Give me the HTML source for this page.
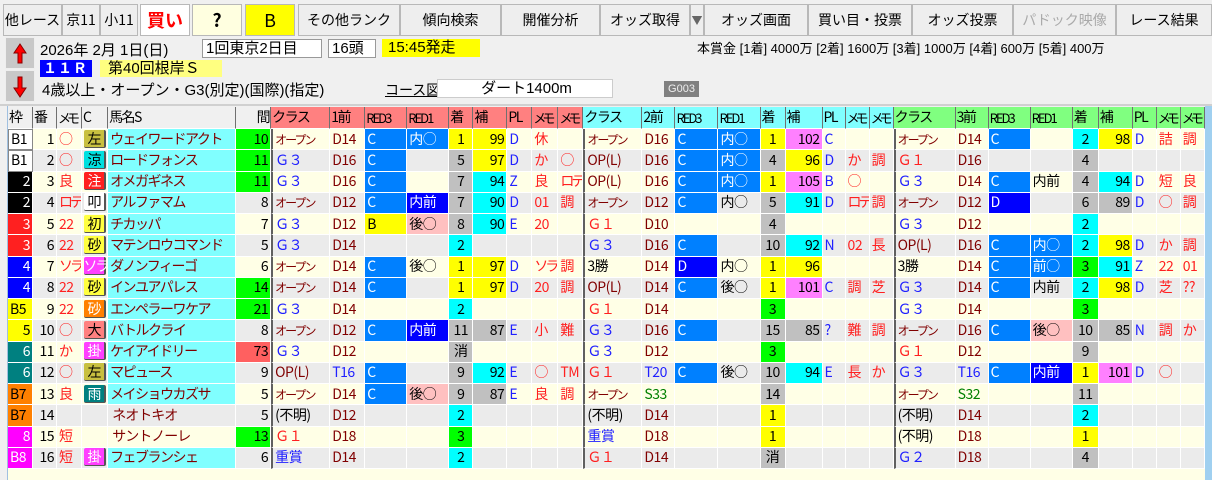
<!DOCTYPE html>
<html><head><meta charset="utf-8">
<style>
*{box-sizing:border-box;margin:0;padding:0}
body{width:1212px;height:480px;overflow:hidden;background:#f0f0f0;font-family:"Liberation Sans","Noto Sans CJK JP",sans-serif;position:relative;font-size:15px;color:#000}
.b{position:absolute;top:4px;height:32px;border:1px solid #b8b8b8;background:#eeeeee;text-align:center;line-height:30px;font-size:14px;white-space:nowrap;overflow:hidden;font-family:"Noto Sans CJK JP",sans-serif}
.a{position:absolute;font-size:15px;white-space:nowrap}
.box{position:absolute;background:#fff;border:1px solid #999;font-size:15px;line-height:17px;padding-left:3px}
table{position:absolute;left:8px;top:107px;border-collapse:separate;border-spacing:0;table-layout:fixed;width:1197px;background:#ffffe6;font-family:"Noto Sans CJK JP",sans-serif}
td{height:21.25px;border-right:1px solid #fff;border-bottom:1px solid #fff;font-size:14px;line-height:19px;padding:0 2px;white-space:nowrap;overflow:hidden;letter-spacing:-0.5px}
tr.h td{height:22px;background:#f0f0f0;border-right:1px solid #707070;border-bottom:1px solid #fff;font-size:14px;letter-spacing:-1.5px;padding:0 1px}
tr.h td.s{background:#ff8080}tr.h td.c{background:#80ffff}tr.h td.l{background:#80ff80}
tr.h td.n{font-size:13px;letter-spacing:-2px}
tr.h td.mm{font-size:13px;letter-spacing:-4px}
tr.e td{background:#ebebeb}
tr td.nm{background:#80ffff;color:#800000;letter-spacing:-1.5px}
tr td.ne{color:#800000;letter-spacing:-1px}
.r{text-align:right}.cc{text-align:center}
.sep{border-left:2px solid #606060}
.y{background:#ffff00 !important}.cy{background:#00ffff !important}.gr{background:#c0c0c0 !important}.g{background:#00ff00 !important}.m{background:#ff80ff !important}
.bl{background:#0080ff !important;color:#fff}.db{background:#0000ff !important;color:#fff}.pk{background:#ffc0c0 !important}
.rd{color:#ff2020}.dr{color:#800000}.bu{color:#2020ff}.gn{color:#008000}
.t{letter-spacing:-3px !important}
.op{color:#800000;font-size:12px !important;letter-spacing:-2px !important}
.w{background:#fff !important;border:1px solid #888 !important}
.k{background:#000 !important;color:#fff}.r3{background:#ff2020 !important;color:#fff}.f4{background:#0000ff !important;color:#fff}.f5{background:#ffff00 !important}.f6{background:#008080 !important;color:#fff}.f7{background:#ff8000 !important}.f8{background:#ff00ff !important;color:#fff}
.ic{padding:0 !important;text-align:center;letter-spacing:-2px}
.ic span{display:inline-block;width:22px;height:18px;line-height:18px;border-radius:2px;border-right:2px solid #555;border-bottom:1px solid #555}
</style></head><body>
<div class="b" style="left:3px;width:59px">他レース</div>
<div class="b" style="left:62px;width:38px">京11</div>
<div class="b" style="left:100px;width:38px">小11</div>
<div class="b" style="left:140px;width:50px;background:#fff;color:#ff0000;font-weight:bold;font-size:18px">買い</div>
<div class="b" style="left:192px;width:50px;background:#ffffe0;font-weight:bold;font-size:18px">?</div>
<div class="b" style="left:245px;width:50px;background:#ffff00;font-size:18px">B</div>
<div class="b" style="left:298px;width:102px">その他ランク</div>
<div class="b" style="left:400px;width:101px">傾向検索</div>
<div class="b" style="left:501px;width:99px">開催分析</div>
<div class="b" style="left:600px;width:90px">オッズ取得</div>
<div class="b" style="left:690px;width:14px;color:#666;font-size:11px">▼</div>
<div class="b" style="left:704px;width:104px">オッズ画面</div>
<div class="b" style="left:808px;width:104px">買い目・投票</div>
<div class="b" style="left:912px;width:101px">オッズ投票</div>
<div class="b" style="left:1013px;width:103px;color:#aaa">パドック映像</div>
<div class="b" style="left:1116px;width:96px">レース結果</div>

<div style="position:absolute;left:5px;top:37px;width:30px;height:32px;background:#c8c8c8;border:1px solid #eee"><svg width="28" height="30"><path d="M14 6 L8 15 H12 V25 H16 V15 H20 Z" fill="#f00" stroke="#800" stroke-width="1"/></svg></div>
<div style="position:absolute;left:5px;top:70px;width:30px;height:32px;background:#c8c8c8;border:1px solid #eee"><svg width="28" height="30"><path d="M14 26 L8 17 H12 V6 H16 V17 H20 Z" fill="#f00" stroke="#800" stroke-width="1"/></svg></div>
<div class="a" style="left:40px;top:39px">2026年 2月 1日(日)</div>
<div class="box" style="left:202px;top:39px;width:120px">1回東京2日目</div>
<div class="box" style="left:328px;top:39px;width:48px">16頭</div>
<div class="a" style="left:382px;top:39px;width:98px;height:18px;background:#ffff00;line-height:18px;padding-left:6px">15:45発走</div>
<div class="a" style="left:697px;top:38px;font-size:13px">本賞金 [1着] 4000万 [2着] 1600万 [3着] 1000万 [4着] 600万 [5着] 400万</div>
<div class="a" style="left:40px;top:60px;width:52px;height:17px;background:#0000ff;color:#fff;line-height:17px;font-weight:bold;font-size:14px;letter-spacing:1px;padding-left:3px">１１Ｒ</div>
<div class="a" style="left:100px;top:60px;width:122px;height:17px;background:#ffff80;line-height:17px;padding-left:8px">第40回根岸Ｓ</div>
<div class="a" style="left:42px;top:79px">4歳以上・オープン・G3(別定)(国際)(指定)</div>
<div class="a" style="left:385px;top:80px;text-decoration:underline;font-size:14px">コース図</div>
<div class="box" style="left:437px;top:79px;width:176px;text-align:center;border-color:#ccc">ダート1400m</div>
<div class="a" style="left:664px;top:81px;width:35px;height:16px;background:#808080;color:#eee;font-size:11px;line-height:16px;text-align:center">G003</div>
<div style="position:absolute;left:0;top:104px;width:1212px;height:2px;background:#d0d0d0"></div>
<div style="position:absolute;left:1205px;top:106px;width:7px;height:374px;background:#a0d0f0"></div>
<div style="position:absolute;left:0;top:106px;width:8px;height:374px;background:#f0f0f0"></div>
<div style="position:absolute;left:7px;top:106px;width:1px;height:374px;background:#a0c0e0"></div>
<div style="position:absolute;left:8px;top:107px;width:1197px;height:373px;background:#ffffe6"></div>

<table>
<colgroup><col width="25"><col width="24"><col width="25"><col width="26"><col width="128"><col width="35"><col width="59"><col width="35"><col width="42"><col width="42"><col width="24"><col width="34"><col width="25"><col width="26"><col width="25"><col width="59"><col width="33"><col width="43"><col width="42"><col width="25"><col width="37"><col width="23"><col width="24"><col width="24"><col width="62"><col width="33"><col width="42"><col width="42"><col width="26"><col width="34"><col width="24"><col width="24"><col width="24"></colgroup>
<tr class="h"><td>枠</td><td>番</td><td class="mm">メモ</td><td>C</td><td>馬名S</td><td class="r">間</td><td class="s">クラス</td><td class="s">1前</td><td class="s n">RED3</td><td class="s n">RED1</td><td class="s">着</td><td class="s">補</td><td class="s">PL</td><td class="s mm">メモ</td><td class="s mm">メモ</td><td class="c">クラス</td><td class="c">2前</td><td class="c n">RED3</td><td class="c n">RED1</td><td class="c">着</td><td class="c">補</td><td class="c">PL</td><td class="c mm">メモ</td><td class="c mm">メモ</td><td class="l">クラス</td><td class="l">3前</td><td class="l n">RED3</td><td class="l n">RED1</td><td class="l">着</td><td class="l">補</td><td class="l">PL</td><td class="l mm">メモ</td><td class="l mm">メモ</td></tr>

<tr><td class="w">B1</td><td class="r">1</td><td class="rd">○</td><td class="ic"><span style="background:#c8c040">左</span></td><td class="nm">ウェイワードアクト</td><td class="r g">10</td><td class="sep op">オープン</td><td class="dr">D14</td><td class="bl">C</td><td class="bl">内○</td><td class="y cc">1</td><td class="y r">99</td><td class="bu">D</td><td class="rd">休</td><td></td><td class="sep op">オープン</td><td class="dr">D16</td><td class="bl">C</td><td class="bl">内○</td><td class="y cc">1</td><td class="m r">102</td><td class="bu">C</td><td></td><td></td><td class="sep op">オープン</td><td class="dr">D14</td><td class="bl">C</td><td></td><td class="cy cc">2</td><td class="y r">98</td><td class="bu">D</td><td class="rd">詰</td><td class="rd">調</td></tr>
<tr class="e"><td class="w">B1</td><td class="r">2</td><td class="rd">○</td><td class="ic"><span style="background:#00e0e0">涼</span></td><td class="nm">ロードフォンス</td><td class="r g">11</td><td class="sep bu">Ｇ３</td><td class="dr">D16</td><td class="bl">C</td><td></td><td class="gr cc">5</td><td class="y r">97</td><td class="bu">D</td><td class="rd">か</td><td class="rd">○</td><td class="sep dr">OP(L)</td><td class="dr">D16</td><td class="bl">C</td><td class="bl">内○</td><td class="gr cc">4</td><td class="y r">96</td><td class="bu">D</td><td class="rd">か</td><td class="rd">調</td><td class="sep rd">Ｇ１</td><td class="dr">D16</td><td></td><td></td><td class="gr cc">4</td><td></td><td></td><td></td><td></td></tr>
<tr><td class="k r">2</td><td class="r">3</td><td class="rd">良</td><td class="ic"><span style="background:#ff2020;color:#fff">注</span></td><td class="nm">オメガギネス</td><td class="r g">11</td><td class="sep bu">Ｇ３</td><td class="dr">D16</td><td class="bl">C</td><td></td><td class="gr cc">7</td><td class="cy r">94</td><td class="bu">Z</td><td class="rd">良</td><td class="rd t">ロテ</td><td class="sep dr">OP(L)</td><td class="dr">D16</td><td class="bl">C</td><td class="bl">内○</td><td class="y cc">1</td><td class="m r">105</td><td class="bu">B</td><td class="rd">○</td><td></td><td class="sep bu">Ｇ３</td><td class="dr">D14</td><td class="bl">C</td><td>内前</td><td class="gr cc">4</td><td class="cy r">94</td><td class="bu">D</td><td class="rd">短</td><td class="rd">良</td></tr>
<tr class="e"><td class="k r">2</td><td class="r">4</td><td class="rd t">ロテ</td><td class="ic"><span style="background:#fff">叩</span></td><td class="nm">アルファマム</td><td class="r">8</td><td class="sep op">オープン</td><td class="dr">D12</td><td class="bl">C</td><td class="db">内前</td><td class="gr cc">7</td><td class="cy r">90</td><td class="bu">D</td><td class="rd">01</td><td class="rd">調</td><td class="sep op">オープン</td><td class="dr">D12</td><td class="bl">C</td><td>内○</td><td class="gr cc">5</td><td class="cy r">91</td><td class="bu">D</td><td class="rd t">ロテ</td><td class="rd">調</td><td class="sep op">オープン</td><td class="dr">D12</td><td class="db">D</td><td></td><td class="gr cc">6</td><td class="gr r">89</td><td class="bu">D</td><td class="rd">○</td><td class="rd">調</td></tr>
<tr><td class="r3 r">3</td><td class="r">5</td><td class="rd">22</td><td class="ic"><span style="background:#ffff40">初</span></td><td class="nm">チカッパ</td><td class="r">7</td><td class="sep bu">Ｇ３</td><td class="dr">D12</td><td class="y">B</td><td class="pk">後○</td><td class="gr cc">8</td><td class="cy r">90</td><td class="bu">E</td><td class="rd">20</td><td></td><td class="sep rd">Ｇ１</td><td class="dr">D10</td><td></td><td></td><td class="gr cc">4</td><td></td><td></td><td></td><td></td><td class="sep bu">Ｇ３</td><td class="dr">D12</td><td></td><td></td><td class="cy cc">2</td><td></td><td></td><td></td><td></td></tr>
<tr class="e"><td class="r3 r">3</td><td class="r">6</td><td class="rd">22</td><td class="ic"><span style="background:#ffff40">砂</span></td><td class="nm">マテンロウコマンド</td><td class="r">5</td><td class="sep bu">Ｇ３</td><td class="dr">D14</td><td></td><td></td><td class="cy cc">2</td><td></td><td></td><td></td><td></td><td class="sep bu">Ｇ３</td><td class="dr">D16</td><td class="bl">C</td><td></td><td class="gr cc">10</td><td class="cy r">92</td><td class="bu">N</td><td class="rd">02</td><td class="rd">長</td><td class="sep dr">OP(L)</td><td class="dr">D16</td><td class="bl">C</td><td class="bl">内○</td><td class="cy cc">2</td><td class="y r">98</td><td class="bu">D</td><td class="rd">か</td><td class="rd">調</td></tr>
<tr><td class="f4 r">4</td><td class="r">7</td><td class="rd t">ソラ</td><td class="ic"><span style="background:#ff40ff;color:#fff">ソラ</span></td><td class="nm">ダノンフィーゴ</td><td class="r">6</td><td class="sep op">オープン</td><td class="dr">D14</td><td class="bl">C</td><td>後○</td><td class="y cc">1</td><td class="y r">97</td><td class="bu">D</td><td class="rd t">ソラ</td><td class="rd">調</td><td class="sep">3勝</td><td class="dr">D14</td><td class="db">D</td><td>内○</td><td class="y cc">1</td><td class="y r">96</td><td></td><td></td><td></td><td class="sep">3勝</td><td class="dr">D14</td><td class="bl">C</td><td class="bl">前○</td><td class="g cc">3</td><td class="cy r">91</td><td class="bu">Z</td><td class="rd">22</td><td class="rd">01</td></tr>
<tr class="e"><td class="f4 r">4</td><td class="r">8</td><td class="rd">22</td><td class="ic"><span style="background:#ffff40">砂</span></td><td class="nm">インユアパレス</td><td class="r g">14</td><td class="sep op">オープン</td><td class="dr">D14</td><td class="bl">C</td><td></td><td class="y cc">1</td><td class="y r">97</td><td class="bu">D</td><td class="rd">20</td><td class="rd">調</td><td class="sep dr">OP(L)</td><td class="dr">D14</td><td class="bl">C</td><td>後○</td><td class="y cc">1</td><td class="m r">101</td><td class="bu">C</td><td class="rd">調</td><td class="rd">芝</td><td class="sep bu">Ｇ３</td><td class="dr">D14</td><td class="bl">C</td><td>内前</td><td class="cy cc">2</td><td class="y r">98</td><td class="bu">D</td><td class="rd">芝</td><td class="rd">??</td></tr>
<tr><td class="f5">B5</td><td class="r">9</td><td class="rd">22</td><td class="ic"><span style="background:#ff8000;color:#fff">砂</span></td><td class="nm">エンペラーワケア</td><td class="r g">21</td><td class="sep bu">Ｇ３</td><td class="dr">D14</td><td></td><td></td><td class="cy cc">2</td><td></td><td></td><td></td><td></td><td class="sep rd">Ｇ１</td><td class="dr">D14</td><td></td><td></td><td class="g cc">3</td><td></td><td></td><td></td><td></td><td class="sep bu">Ｇ３</td><td class="dr">D14</td><td></td><td></td><td class="g cc">3</td><td></td><td></td><td></td><td></td></tr>
<tr class="e"><td class="f5 r">5</td><td class="r">10</td><td class="rd">○</td><td class="ic"><span style="background:#ff8080">大</span></td><td class="nm">バトルクライ</td><td class="r">8</td><td class="sep op">オープン</td><td class="dr">D12</td><td class="bl">C</td><td class="db">内前</td><td class="gr cc">11</td><td class="gr r">87</td><td class="bu">E</td><td class="rd">小</td><td class="rd">難</td><td class="sep bu">Ｇ３</td><td class="dr">D16</td><td class="bl">C</td><td></td><td class="gr cc">15</td><td class="gr r">85</td><td class="bu">?</td><td class="rd">難</td><td class="rd">調</td><td class="sep op">オープン</td><td class="dr">D16</td><td class="bl">C</td><td class="pk">後○</td><td class="gr cc">10</td><td class="gr r">85</td><td class="bu">N</td><td class="rd">調</td><td class="rd">か</td></tr>
<tr><td class="f6 r">6</td><td class="r">11</td><td class="rd">か</td><td class="ic"><span style="background:#ff40ff;color:#fff">掛</span></td><td class="nm">ケイアイドリー</td><td class="r" style="background:#ff6060">73</td><td class="sep bu">Ｇ３</td><td class="dr">D12</td><td></td><td></td><td class="gr cc">消</td><td></td><td></td><td></td><td></td><td class="sep bu">Ｇ３</td><td class="dr">D12</td><td></td><td></td><td class="g cc">3</td><td></td><td></td><td></td><td></td><td class="sep rd">Ｇ１</td><td class="dr">D12</td><td></td><td></td><td class="gr cc">9</td><td></td><td></td><td></td><td></td></tr>
<tr class="e"><td class="f6 r">6</td><td class="r">12</td><td class="rd">○</td><td class="ic"><span style="background:#c8c040">左</span></td><td class="nm">マピュース</td><td class="r">9</td><td class="sep dr">OP(L)</td><td class="bu">T16</td><td class="bl">C</td><td></td><td class="gr cc">9</td><td class="cy r">92</td><td class="bu">E</td><td class="rd">○</td><td class="rd">TM</td><td class="sep rd">Ｇ１</td><td class="bu">T20</td><td class="bl">C</td><td>後○</td><td class="gr cc">10</td><td class="cy r">94</td><td class="bu">E</td><td class="rd">長</td><td class="rd">か</td><td class="sep bu">Ｇ３</td><td class="bu">T16</td><td class="bl">C</td><td class="db">内前</td><td class="y cc">1</td><td class="m r">101</td><td class="bu">D</td><td class="rd">○</td><td></td></tr>
<tr><td class="f7">B7</td><td class="r">13</td><td class="rd">良</td><td class="ic"><span style="background:#008080;color:#fff">雨</span></td><td class="nm">メイショウカズサ</td><td class="r">5</td><td class="sep op">オープン</td><td class="dr">D14</td><td class="bl">C</td><td class="pk">後○</td><td class="gr cc">9</td><td class="gr r">87</td><td class="bu">E</td><td class="rd">良</td><td class="rd">調</td><td class="sep op">オープン</td><td class="gn">S33</td><td></td><td></td><td class="gr cc">14</td><td></td><td></td><td></td><td></td><td class="sep op">オープン</td><td class="gn">S32</td><td></td><td></td><td class="gr cc">11</td><td></td><td></td><td></td><td></td></tr>
<tr class="e"><td class="f7">B7</td><td class="r">14</td><td></td><td></td><td class="ne">&nbsp;ネオトキオ</td><td class="r">5</td><td class="sep">(不明)</td><td class="dr">D12</td><td></td><td></td><td class="cy cc">2</td><td></td><td></td><td></td><td></td><td class="sep">(不明)</td><td class="dr">D14</td><td></td><td></td><td class="y cc">1</td><td></td><td></td><td></td><td></td><td class="sep">(不明)</td><td class="dr">D14</td><td></td><td></td><td class="cy cc">2</td><td></td><td></td><td></td><td></td></tr>
<tr><td class="f8 r">8</td><td class="r">15</td><td class="rd">短</td><td></td><td class="ne">&nbsp;サントノーレ</td><td class="r g">13</td><td class="sep rd">Ｇ１</td><td class="dr">D18</td><td></td><td></td><td class="g cc">3</td><td></td><td></td><td></td><td></td><td class="sep bu">重賞</td><td class="dr">D18</td><td></td><td></td><td class="y cc">1</td><td></td><td></td><td></td><td></td><td class="sep">(不明)</td><td class="dr">D18</td><td></td><td></td><td class="y cc">1</td><td></td><td></td><td></td><td></td></tr>
<tr class="e"><td class="f8">B8</td><td class="r">16</td><td class="rd">短</td><td class="ic"><span style="background:#ff40ff;color:#fff">掛</span></td><td class="nm">フェブランシェ</td><td class="r">6</td><td class="sep bu">重賞</td><td class="dr">D14</td><td></td><td></td><td class="cy cc">2</td><td></td><td></td><td></td><td></td><td class="sep rd">Ｇ１</td><td class="dr">D14</td><td></td><td></td><td class="gr cc">消</td><td></td><td></td><td></td><td></td><td class="sep bu">Ｇ２</td><td class="dr">D18</td><td></td><td></td><td class="gr cc">4</td><td></td><td></td><td></td><td></td></tr>
</table>
</body></html>
